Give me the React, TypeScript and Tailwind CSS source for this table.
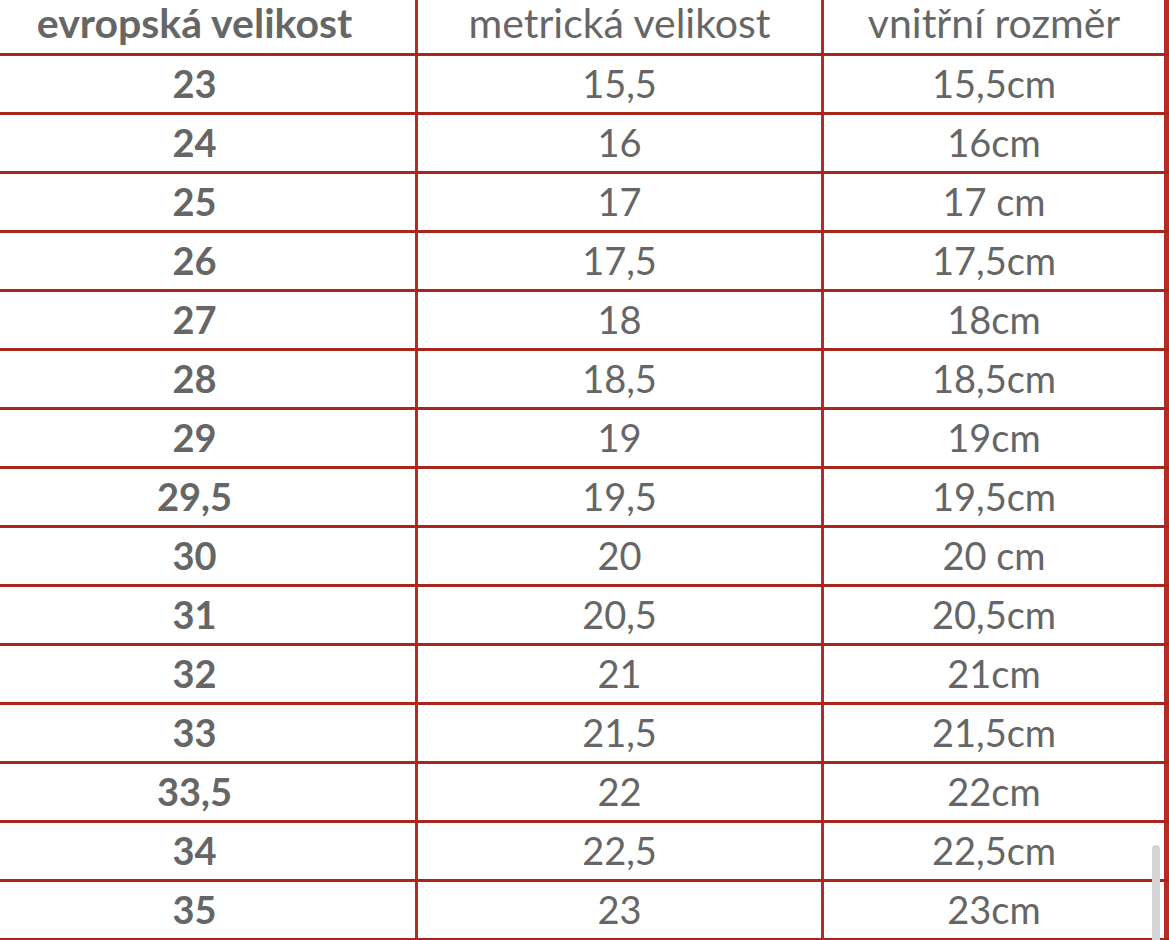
import React from "react";

const rows: [string, string, string][] = [
  ["23", "15,5", "15,5cm"],
  ["24", "16", "16cm"],
  ["25", "17", "17 cm"],
  ["26", "17,5", "17,5cm"],
  ["27", "18", "18cm"],
  ["28", "18,5", "18,5cm"],
  ["29", "19", "19cm"],
  ["29,5", "19,5", "19,5cm"],
  ["30", "20", "20 cm"],
  ["31", "20,5", "20,5cm"],
  ["32", "21", "21cm"],
  ["33", "21,5", "21,5cm"],
  ["33,5", "22", "22cm"],
  ["34", "22,5", "22,5cm"],
  ["35", "23", "23cm"],
];

export default function App() {
  return (
    <div
      className="relative w-[1169px] h-[940px] overflow-hidden bg-white text-[#666666]"
      style={{ fontFamily: "Lato, 'Open Sans', sans-serif" }}
    >
      <div className="flex h-[56px] border-b-[3px] border-[#a9261f] text-[41px] leading-none">
        <div className="w-[418px] shrink-0 border-r-[3px] border-[#b52b25] pr-[26px] flex items-center justify-center font-bold pb-[8px]">
          evropská velikost
        </div>
        <div className="w-[406px] shrink-0 border-r-[3px] border-[#b52b25] flex items-center justify-center pb-[8px]">
          metrická velikost
        </div>
        <div className="w-[345px] shrink-0 border-r-[5px] border-[#b52b25] flex items-center justify-center pb-[8px]">
          vnitřní rozměr
        </div>
      </div>
      {rows.map((r, i) => (
        <div
          key={i}
          className="flex h-[59px] border-b-[3px] border-[#a9261f] text-[38px] leading-none"
        >
          <div className="w-[418px] shrink-0 border-r-[3px] border-[#b52b25] pr-[26px] flex items-center justify-center font-bold pb-[2px]">
            {r[0]}
          </div>
          <div className="w-[406px] shrink-0 border-r-[3px] border-[#b52b25] flex items-center justify-center pb-[2px]">
            {r[1]}
          </div>
          <div className="w-[345px] shrink-0 border-r-[5px] border-[#b52b25] flex items-center justify-center pb-[2px]">
            {r[2]}
          </div>
        </div>
      ))}
      <div className="absolute right-[9px] top-[845px] w-[8px] h-[110px] rounded-full bg-[#d4d4d4]" />
    </div>
  );
}
